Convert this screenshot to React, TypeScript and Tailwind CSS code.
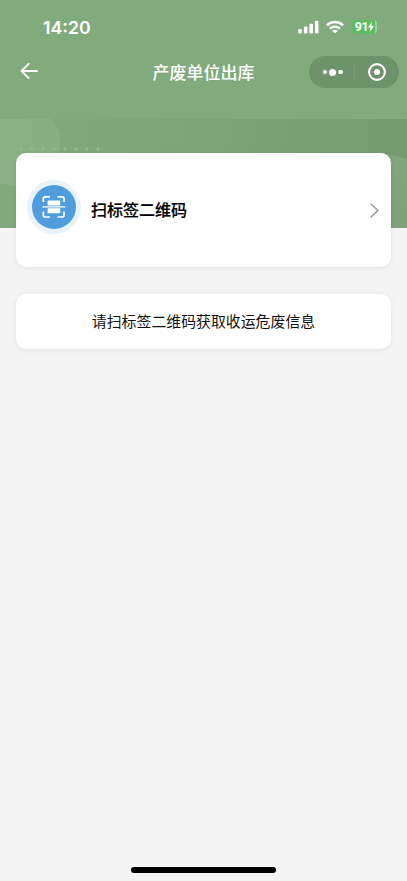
import type { ReactNode } from "react";

// ── Status bar ────────────────────────────────────────────────────────────────

function SignalIcon() {
  return (
    <svg width="21" height="14" viewBox="0 0 21 14" fill="#fff">
      <rect x="0.2" y="9" width="3.6" height="4.6" rx="1" />
      <rect x="5.9" y="6.6" width="3.6" height="7" rx="1" />
      <rect x="11.4" y="3.7" width="3.6" height="9.9" rx="1" />
      <rect x="16.9" y="0.8" width="3.6" height="12.8" rx="1" />
    </svg>
  );
}

function WifiIcon() {
  return (
    <svg width="18" height="14" viewBox="0 0 18 14" fill="none" stroke="#fff" strokeWidth="2.4">
      <path d="M0.9 5.3C5.4 0.9 12.6 0.9 17.1 5.3" />
      <path d="M3.9 8.6C6.8 5.9 11.2 5.9 14.1 8.6" />
      <path d="M9 13.6L6.1 10.8C7.8 9.3 10.2 9.3 11.9 10.8Z" fill="#fff" stroke="none" />
    </svg>
  );
}

function Battery() {
  return (
    <div className="flex items-center">
      <div className="flex h-[14px] w-[25px] items-center justify-center overflow-hidden rounded-[4px] bg-[linear-gradient(to_right,#5cbd64_92%,#a2cda1_92%)]">
        <span className="font-['Roboto'] text-[12.5px] leading-none font-bold tracking-[-0.3px] text-white">91</span>
        <svg width="6" height="10" viewBox="0 0 6 10" fill="#fff">
          <path d="M3.9 0L0 5.6H2.5L1.8 10L6 4.2H3.4Z" />
        </svg>
      </div>
      <div className="ml-px h-1 w-px rounded-r bg-[#8fb98b]" />
    </div>
  );
}

function StatusBar() {
  return (
    <div className="flex h-[54px] items-center justify-between pr-[28px] pl-[43px]">
      <span className="pt-0.5 text-[17.7px] leading-none font-semibold text-white">14:20</span>
      <div className="flex items-center">
        <SignalIcon />
        <div className="w-[7px]" />
        <WifiIcon />
        <div className="w-[8px]" />
        <Battery />
      </div>
    </div>
  );
}

// ── Nav bar ───────────────────────────────────────────────────────────────────

function NavBar() {
  return (
    <div className="grid h-9 grid-cols-[1fr_auto_1fr] items-center pr-2 pl-5">
      <svg width="18" height="16" viewBox="0 0 18 16" fill="none" stroke="#fff" strokeWidth="1.9" strokeLinecap="round" strokeLinejoin="round" className="mb-0.5">
        <path d="M17 8H1.5M8.7 0.9L1.5 8L8.7 15.1" />
      </svg>
      <h1 className="-ml-3 pt-0.5 text-[17px] leading-none font-medium text-white">产废单位出库</h1>
      <div className="flex h-8 w-[90px] items-center justify-self-end rounded-full bg-[#6e936b]">
        <div className="flex w-[45px] items-center justify-center gap-[2px] pl-[2px]">
          <i className="size-[4.5px] rounded-full bg-white" />
          <i className="size-[7px] rounded-full bg-white" />
          <i className="size-[4.5px] rounded-full bg-white" />
        </div>
        <div className="h-[18px] w-px bg-[#789b75]" />
        <div className="flex flex-1 items-center justify-center">
          <svg width="18" height="18" viewBox="0 0 18 18">
            <circle cx="9" cy="9" r="7.9" fill="none" stroke="#fff" strokeWidth="2.1" />
            <circle cx="9" cy="9" r="3.1" fill="#fff" />
          </svg>
        </div>
      </div>
    </div>
  );
}

// ── Banner behind the first card ──────────────────────────────────────────────

function Banner() {
  return (
    <svg width="407" height="109" viewBox="0 0 407 109" className="block">
      <defs>
        <linearGradient id="base" x1="0" y1="0" x2="1" y2="0">
          <stop offset="0" stopColor="#80aa7b" />
          <stop offset="0.5" stopColor="#7ca578" />
          <stop offset="1" stopColor="#769b72" />
        </linearGradient>
        <linearGradient id="blob" x1="0" y1="0" x2="1" y2="0">
          <stop offset="0" stopColor="#8bb086" />
          <stop offset="1" stopColor="#87af82" />
        </linearGradient>
        <linearGradient id="hill" x1="0" y1="0" x2="0" y2="1">
          <stop offset="0" stopColor="#82a57f" />
          <stop offset="1" stopColor="#7ba376" />
        </linearGradient>
      </defs>
      <rect width="407" height="109" fill="url(#base)" />
      <path d="M0 0H52C58 7 60 15 60 23C60 49 42 68 17 68L0 64Z" fill="url(#blob)" />
      {[21, 32, 43, 54, 65, 76, 87, 98].map((x) => (
        <circle key={x} cx={x} cy="30" r="1.7" fill="#93b88e" />
      ))}
      <path d="M350 36C375 34 392 35 407 40V109H350Z" fill="url(#hill)" />
    </svg>
  );
}

// ── Cards ─────────────────────────────────────────────────────────────────────

function ScanIcon() {
  return (
    <div className="flex size-[54px] items-center justify-center rounded-full bg-[#e8f3fc]">
      <div className="flex size-[44px] items-center justify-center rounded-full bg-[#509cdc]">
        <svg width="24" height="24" viewBox="0 0 24 24" fill="none" stroke="#fff" strokeWidth="1.7">
          <path d="M1.4 7V3.6Q1.4 1.8 3.2 1.8H8M15.5 1.8H20.2Q22 1.8 22 3.6V7M22 16.5V20.2Q22 22 20.2 22H15.5M8 22H3.2Q1.4 22 1.4 20.2V16.5" />
          <path d="M0.5 11.9H23.3" strokeWidth="1.3" />
          <rect x="5.6" y="5.6" width="12.6" height="4.9" rx="0.5" fill="#fff" stroke="none" />
          <rect x="5.6" y="13.3" width="12.6" height="4.9" rx="0.5" fill="#fff" stroke="none" />
        </svg>
      </div>
    </div>
  );
}

function Card({ className, children }: { className: string; children: ReactNode }) {
  return (
    <div className={`relative mx-4 flex items-center rounded-[10px] bg-white shadow-[0_1px_5px_rgba(0,0,0,0.08)] ${className}`}>
      {children}
    </div>
  );
}

export default function App() {
  return (
    <div className="flex h-[881px] w-[407px] flex-col overflow-hidden bg-[#f4f4f4] font-['Inter','Noto_Sans_CJK_SC',sans-serif]">
      <header className="h-[228px] shrink-0 bg-[#82ab7d]">
        <StatusBar />
        <NavBar />
        <div className="h-[29px]" />
        <Banner />
      </header>

      <main className="-mt-[75px] flex-1">
        <Card className="h-[114px] pr-3 pl-[11px]">
          <div className="mb-[7px]">
            <ScanIcon />
          </div>
          <span className="ml-[10px] flex-1 text-[16px] leading-none font-medium text-black [-webkit-text-stroke:0.2px_#000]">扫标签二维码</span>
          <svg width="9" height="15" viewBox="0 0 9 15" fill="none" stroke="#999" strokeWidth="1.5" strokeLinecap="round" strokeLinejoin="round">
            <path d="M1 1L8 7.5L1 14" />
          </svg>
        </Card>

        <Card className="mt-[27px] h-[55px] justify-center">
          <p className="pt-0.5 text-[14.9px] leading-none text-[#111]">请扫标签二维码获取收运危废信息</p>
        </Card>
      </main>

      {/* Home indicator */}
      <div className="mb-2 h-[6px] w-[145px] self-center rounded-full bg-black" />
    </div>
  );
}
